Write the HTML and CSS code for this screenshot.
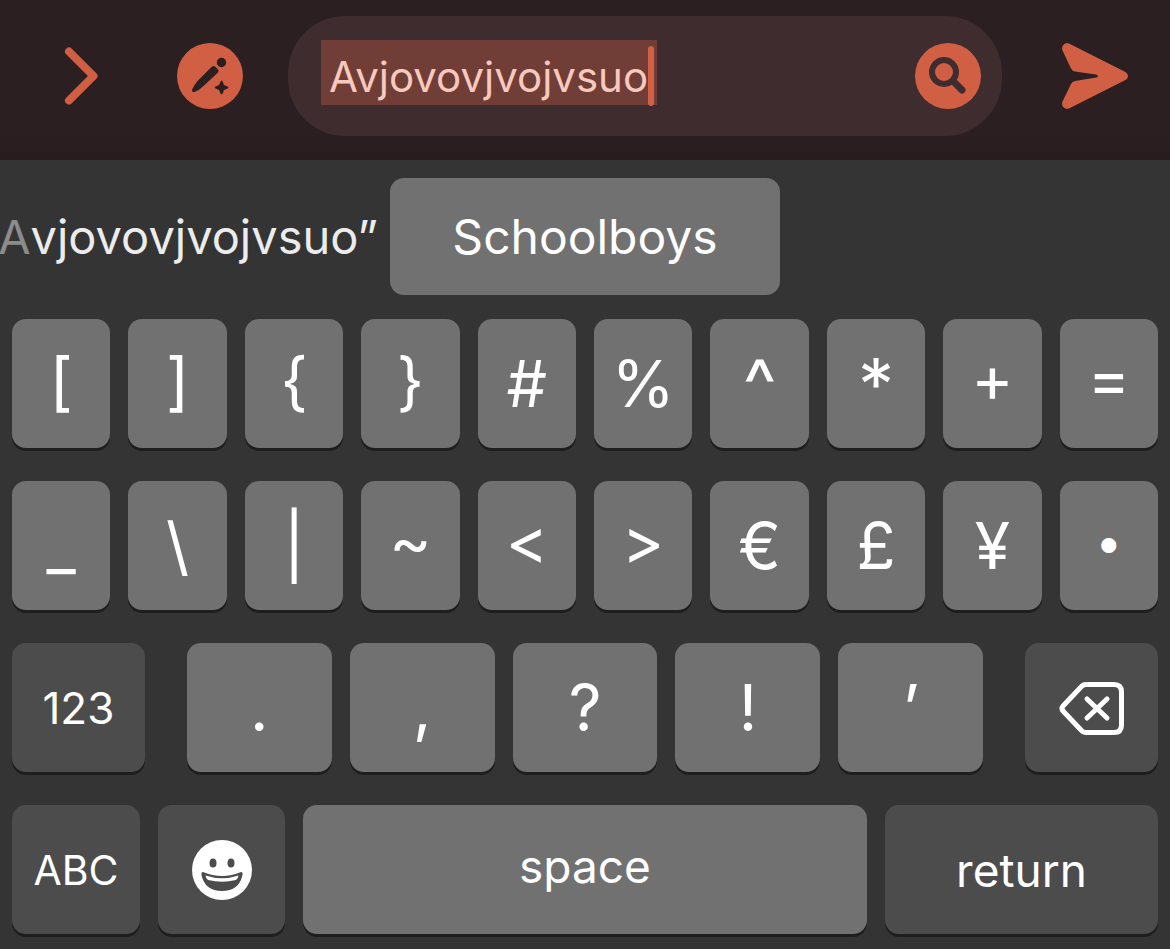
FILE: index.html
```html
<!DOCTYPE html>
<html lang="en">
    <head>
        <meta charset="utf-8"/>
        <meta name="viewport" content="width=device-width, initial-scale=1">
        <title>Message</title>
        <link rel="stylesheet" href="styles.css">
    </head>
    <body>
        <header class="composer">
            <button class="icon-button expand" aria-label="Expand">
                <svg width="34" height="58" viewBox="0 0 34 58">
                    <path d="M5 4.500L29.500 29L5 53.500" fill="none" stroke="currentColor" stroke-width="8" stroke-linecap="round" stroke-linejoin="round"/>
                </svg>
            </button>
            <button class="icon-button" aria-label="Edit">
                <svg width="66" height="66" viewBox="0 0 66 66">
                    <circle cx="33" cy="33" r="33" fill="currentColor"/>
                    <g fill="#2c1f22">
                        <circle cx="44.500" cy="19.500" r="4.700"/>
                        <path d="M34.500 24Q36.500 22 38.500 24L40.500 26Q42.500 28 40.500 30L26.500 43Q22.500 47 17.500 49Q14.500 49.500 15.200 46.500Q17 42 20.500 38Z"/>
                        <path d="M44.500 37.500Q45.500 37.500 46 39.500L47 42L50 43.200Q51.500 44 51.500 44.500Q51.500 45.200 50 45.800L47 47L46 49.800Q45.300 51.500 44.500 51.500Q43.800 51.500 43.200 49.800L42 47L39.200 45.800Q37.700 45.200 37.700 44.500Q37.700 43.800 39.200 43.200L42 42L43.200 39.500Q43.800 37.500 44.500 37.500Z"/>
                    </g>
                </svg>
            </button>
            <div class="field">
                <div class="field-text">
                    <input type="text" class="field-input" aria-label="Message" value="Avjovovjvojvsuo">
                    <span class="caret"></span>
                </div>
                <button class="icon-button" aria-label="Search">
                    <svg width="66" height="66" viewBox="0 0 66 66">
                        <circle cx="33" cy="33" r="33" fill="currentColor"/>
                        <g fill="none" stroke="#3e2c2e" stroke-width="6">
                            <circle cx="29" cy="29" r="12"/>
                            <path d="M38 38L47 47" stroke-width="7" stroke-linecap="round"/>
                        </g>
                    </svg>
                </button>
            </div>
            <button class="icon-button" aria-label="Send">
                <svg width="66" height="66" viewBox="0 0 66 66">
                    <path d="M7 .6L62.500 28.500Q66 30.500 66 33Q66 35.500 62.500 37.500L7 65.400Q4 66.500 1.800 64.500Q-.8 62 .5 58.500L9 41Q10.300 38.500 13 38L34 34.500Q36 34 36 33Q36 32 34 31.500L13 28.500Q10.300 28 9 25.500L.5 7.500Q-.8 4 1.800 1.500Q4-.5 7 .6Z" fill="currentColor"/>
                </svg>
            </button>
        </header>

        <main class="keyboard">
            <div class="suggestions">
                <button class="suggestion typed"><span class="faded">A</span>vjovovjvojvsuo”</button>
                <button class="suggestion selected">Schoolboys</button>
            </div>

            <div class="row">
                <button class="key">[</button>
                <button class="key">]</button>
                <button class="key">{</button>
                <button class="key">}</button>
                <button class="key">#</button>
                <button class="key">%</button>
                <button class="key raised">^</button>
                <button class="key raised">*</button>
                <button class="key">+</button>
                <button class="key">=</button>
            </div>

            <div class="row">
                <button class="key">_</button>
                <button class="key">\</button>
                <button class="key">|</button>
                <button class="key">~</button>
                <button class="key">&lt;</button>
                <button class="key">&gt;</button>
                <button class="key">€</button>
                <button class="key">£</button>
                <button class="key">¥</button>
                <button class="key bullet">•</button>
            </div>

            <div class="row punctuation">
                <button class="key dark numbers">123</button>
                <div class="row middle">
                    <button class="key">.</button>
                    <button class="key">,</button>
                    <button class="key">?</button>
                    <button class="key">!</button>
                    <button class="key">’</button>
                </div>
                <button class="key dark" aria-label="Delete">
                    <svg width="66" height="56" viewBox="0 0 66 56" fill="none" stroke="#fff" stroke-width="5" stroke-linecap="round" stroke-linejoin="round">
                        <path d="M27 4.500H55Q62.500 4.500 62.500 12V45Q62.500 52.500 55 52.500H27Q24 52.500 22 50L4 31Q2 28.500 4 26L22 7Q24 4.500 27 4.500Z"/>
                        <path d="M28 19L48 38M48 19L28 38"/>
                    </svg>
                </button>
            </div>

            <div class="row bottom">
                <button class="key dark letters">ABC</button>
                <button class="key dark" aria-label="Emoji">
                    <svg width="60" height="60" viewBox="0 0 60 60">
                        <circle cx="30" cy="30" r="30" fill="#fff"/>
                        <g fill="#4c4c4c">
                            <ellipse cx="21" cy="23" rx="3.500" ry="4.500"/>
                            <ellipse cx="39" cy="23" rx="3.500" ry="4.500"/>
                            <path d="M11 32Q30 40 49 32Q51 32 50.500 35Q47 51 30 51Q13 51 9.500 35Q9 32 11 32Z"/>
                        </g>
                        <path d="M13.500 35.500Q30 41 46.500 35.500Q46 39 44 40Q30 43.500 16 40Q14 39 13.500 35.500Z" fill="#fff"/>
                    </svg>
                </button>
                <button class="key word space">space</button>
                <button class="key dark word">return</button>
            </div>
        </main>
    </body>
</html>
```
FILE: styles.css
```css
* {
    box-sizing: border-box;
}

body {
    margin: 0;
    min-height: 100vh;
    background: #343435;
    font-family: Inter, "Liberation Sans", sans-serif;
}

button {
    margin: 0;
    padding: 0;
    border: 0;
    background: none;
    font-family: inherit;
    color: #fff;
}

svg {
    display: block;
}

.composer {
    display: flex;
    align-items: center;
    height: 160px;
    padding: 0 42px 8px 64px;
    background: linear-gradient(to bottom, #2c1f22 85%, #291c1e);
}

.icon-button {
    flex: none;
    color: #d15f43;
}

.expand {
    margin-right: 79px;
}

.field {
    flex: 1;
    display: flex;
    align-items: center;
    justify-content: space-between;
    height: 120px;
    margin: 0 60px 0 45px;
    padding: 0 21px 0 33px;
    border-radius: 57px;
    background: #3e2c2e;
}

.field-text {
    position: relative;
    width: 336px;
    margin-bottom: 7px;
}

.field-input {
    display: block;
    width: 100%;
    height: 65px;
    padding: 8px 0 0 8px;
    border: 0;
    outline: 0;
    background: #703e36;
    color: #f7c9be;
    font-family: inherit;
    font-size: 42px;
}

.caret {
    position: absolute;
    right: 3px;
    top: 6px;
    width: 6px;
    height: 60px;
    border-radius: 3px;
    background: #d15f43;
}

.keyboard {
    display: flex;
    flex-direction: column;
    gap: 33px;
    padding: 18px 12px 15px;
}

.suggestions {
    display: grid;
    grid-template-columns: repeat(3, 1fr);
    height: 117px;
    margin: 0 -12px -9px;
}

.suggestion {
    display: flex;
    align-items: center;
    justify-content: center;
    min-width: 0;
    white-space: nowrap;
    font-size: 48px;
}

.typed {
    justify-content: flex-end;
    padding-right: 12px;
    color: #ececec;
    font-size: 47px;
}

.faded {
    color: #8c8c8c;
}

.selected {
    border-radius: 14px;
    background: #717171;
}

.row {
    display: flex;
    gap: 18px;
}

.key {
    flex: 1 1 0;
    display: flex;
    align-items: center;
    justify-content: center;
    min-width: 0;
    height: 129px;
    border-radius: 14px;
    background: #717171;
    box-shadow: 0 3px 0 #1e1e1e;
    font-size: 64px;
    /* lifts brackets and operators to the middle of the capitals */
    font-feature-settings: "case";
}

.raised {
    font-size: 72px;
    font-feature-settings: normal;
}

.dark {
    background: #4c4c4c;
}

.bullet {
    font-size: 48px;
}

.numbers {
    font-size: 44px;
}

.letters {
    font-size: 41px;
}

.word {
    font-size: 46px;
}

/* 123 and delete sit further away from the punctuation keys */
.punctuation {
    gap: 42px;
}

.punctuation > .middle {
    flex: 6 1 0;
}

.bottom {
    display: grid;
    grid-template-columns: 128fr 127fr 564fr 273fr;
}

.space {
    padding-bottom: 8px;
}
```
